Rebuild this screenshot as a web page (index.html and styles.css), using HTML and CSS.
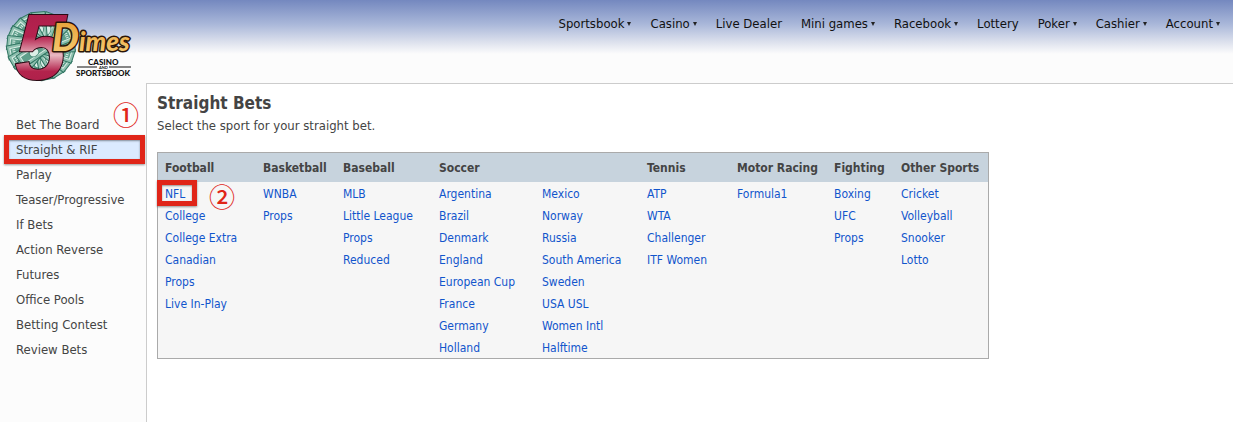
FILE: index.html
```html
<!DOCTYPE html>
<html lang="en">
<head>
  <meta charset="UTF-8" />
  <meta name="viewport" content="width=device-width, initial-scale=1" />
  <title>5Dimes - Straight Bets</title>
  <link rel="stylesheet" href="styles.css">
</head>
<body>
  <header>
    <a class="logo" href="#" aria-label="5Dimes Casino and Sportsbook">
      <svg width="140" height="83" viewBox="0 0 140 83">
        <defs>
          <linearGradient id="five" x1="0" y1="0" x2="0" y2="1">
            <stop offset="0" stop-color="#a81c48" />
            <stop offset="0.4" stop-color="#b5234f" />
            <stop offset="0.58" stop-color="#e9b9c2" />
            <stop offset="0.74" stop-color="#b3234c" />
            <stop offset="1" stop-color="#a81c48" />
          </linearGradient>
          <linearGradient id="gold" x1="0" y1="0" x2="0" y2="1">
            <stop offset="0" stop-color="#e59a2e" />
            <stop offset="1" stop-color="#f7cf78" />
          </linearGradient>
          <g id="bill">
            <rect y="-7" width="34" height="14" fill="#8dbfae" stroke="#2f7562" />
            <rect x="3" y="-4" width="28" height="8" fill="#5f9f8b" stroke="#dcefe7" />
            <ellipse cx="17" rx="5" ry="4" fill="#dcefe7" stroke="#4b8c78" />
            <path d="M26 -2h3M26 0h3M26 2h3" stroke="#dcefe7" />
          </g>
        </defs>
        <use href="#bill" transform="translate(41 46) rotate(100)" />
        <use href="#bill" transform="translate(41 46) rotate(78)" />
        <use href="#bill" transform="translate(41 46) rotate(58)" />
        <use href="#bill" transform="translate(41 46) rotate(38)" />
        <use href="#bill" transform="translate(41 46) rotate(18)" />
        <use href="#bill" transform="translate(41 46) rotate(-2)" />
        <use href="#bill" transform="translate(41 46) rotate(-22)" />
        <use href="#bill" transform="translate(41 46) rotate(-44)" />
        <use href="#bill" transform="translate(41 46) rotate(-70)" />
        <use href="#bill" transform="translate(41 46) rotate(-95)" />
        <use href="#bill" transform="translate(41 46) rotate(-118)" />
        <use href="#bill" transform="translate(41 46) rotate(-138)" />
        <use href="#bill" transform="translate(41 46) rotate(-156)" />
        <use href="#bill" transform="translate(41 46) rotate(-174)" />
        <use href="#bill" transform="translate(41 46) rotate(168)" />
        <use href="#bill" transform="translate(41 46) rotate(150)" />
        <use href="#bill" transform="translate(41 46) rotate(130)" />
        <use href="#bill" transform="translate(20 62) rotate(-34)" />
        <text class="logo-five" x="15" y="79">5</text>
        <text class="logo-dimes" x="52" y="51"><tspan class="logo-d">D</tspan>imes</text>
        <text class="logo-caps" x="88" y="65">CASINO</text>
        <path d="M77 67h20M109 67h22" stroke="#111" />
        <text class="logo-and" x="99" y="69">AND</text>
        <text class="logo-caps" x="76" y="76">SPORTSBOOK</text>
      </svg>
    </a>
    <nav class="topnav">
      <a href="#">Sportsbook<span class="arrow"></span></a>
      <a href="#">Casino<span class="arrow"></span></a>
      <a href="#">Live Dealer</a>
      <a href="#">Mini games<span class="arrow"></span></a>
      <a href="#">Racebook<span class="arrow"></span></a>
      <a href="#">Lottery</a>
      <a href="#">Poker<span class="arrow"></span></a>
      <a href="#">Cashier<span class="arrow"></span></a>
      <a href="#">Account<span class="arrow"></span></a>
    </nav>
  </header>
  <div class="page">
    <nav class="sidebar">
      <a href="#">Bet The Board</a>
      <a href="#" class="active">Straight &amp; RIF<span class="step step-one">①</span></a>
      <a href="#">Parlay</a>
      <a href="#">Teaser/Progressive</a>
      <a href="#">If Bets</a>
      <a href="#">Action Reverse</a>
      <a href="#">Futures</a>
      <a href="#">Office Pools</a>
      <a href="#">Betting Contest</a>
      <a href="#">Review Bets</a>
    </nav>
    <main>
      <h1>Straight Bets</h1>
      <p>Select the sport for your straight bet.</p>
      <table>
        <colgroup>
          <col class="w-football"><col class="w-basketball"><col class="w-baseball">
          <col class="w-soccer"><col class="w-soccer-more"><col class="w-tennis">
          <col class="w-motor"><col class="w-fighting"><col class="w-other">
        </colgroup>
        <thead>
          <tr>
            <th>Football</th>
            <th>Basketball</th>
            <th>Baseball</th>
            <th colspan="2">Soccer</th>
            <th>Tennis</th>
            <th>Motor Racing</th>
            <th>Fighting</th>
            <th>Other Sports</th>
          </tr>
        </thead>
        <tbody>
          <tr>
            <td><a href="#" class="marked">NFL<span class="step step-two">②</span></a></td>
            <td><a href="#">WNBA</a></td>
            <td><a href="#">MLB</a></td>
            <td><a href="#">Argentina</a></td>
            <td><a href="#">Mexico</a></td>
            <td><a href="#">ATP</a></td>
            <td><a href="#">Formula1</a></td>
            <td><a href="#">Boxing</a></td>
            <td><a href="#">Cricket</a></td>
          </tr>
          <tr>
            <td><a href="#">College</a></td>
            <td><a href="#">Props</a></td>
            <td><a href="#">Little League</a></td>
            <td><a href="#">Brazil</a></td>
            <td><a href="#">Norway</a></td>
            <td><a href="#">WTA</a></td>
            <td></td>
            <td><a href="#">UFC</a></td>
            <td><a href="#">Volleyball</a></td>
          </tr>
          <tr>
            <td><a href="#">College Extra</a></td>
            <td></td>
            <td><a href="#">Props</a></td>
            <td><a href="#">Denmark</a></td>
            <td><a href="#">Russia</a></td>
            <td><a href="#">Challenger</a></td>
            <td></td>
            <td><a href="#">Props</a></td>
            <td><a href="#">Snooker</a></td>
          </tr>
          <tr>
            <td><a href="#">Canadian</a></td>
            <td></td>
            <td><a href="#">Reduced</a></td>
            <td><a href="#">England</a></td>
            <td><a href="#">South America</a></td>
            <td><a href="#">ITF Women</a></td>
            <td></td>
            <td></td>
            <td><a href="#">Lotto</a></td>
          </tr>
          <tr>
            <td><a href="#">Props</a></td>
            <td></td>
            <td></td>
            <td><a href="#">European Cup</a></td>
            <td><a href="#">Sweden</a></td>
            <td colspan="4"></td>
          </tr>
          <tr>
            <td><a href="#">Live In-Play</a></td>
            <td></td>
            <td></td>
            <td><a href="#">France</a></td>
            <td><a href="#">USA USL</a></td>
            <td colspan="4"></td>
          </tr>
          <tr>
            <td colspan="3"></td>
            <td><a href="#">Germany</a></td>
            <td><a href="#">Women Intl</a></td>
            <td colspan="4"></td>
          </tr>
          <tr>
            <td colspan="3"></td>
            <td><a href="#">Holland</a></td>
            <td><a href="#">Halftime</a></td>
            <td colspan="4"></td>
          </tr>
        </tbody>
      </table>
    </main>
  </div>
</body>
</html>
```

FILE: styles.css
```css
* {
  box-sizing: border-box;
}
body {
  margin: 0;
  min-height: 100vh;
  display: flex;
  flex-direction: column;
  font-family: Tahoma, "DejaVu Sans Condensed", "DejaVu Sans", sans-serif;
  font-size: 13px;
  color: #444;
  background: #fcfcfc;
}
a {
  color: inherit;
  text-decoration: none;
}
header {
  display: flex;
  justify-content: space-between;
  align-items: flex-start;
  height: 83px;
  background: linear-gradient(#7488bf, #a9b7d9 24px, #dfe3ee 43px, #fcfcfc 54px);
}
.logo svg {
  display: block;
}
.logo-five {
  font: italic bold 92px "Liberation Sans", sans-serif;
  fill: url(#five);
  stroke: #2a0a14;
  stroke-width: 2px;
  paint-order: stroke;
}
.logo-dimes {
  font: italic 900 26px Lato, sans-serif;
  fill: url(#gold);
  stroke: #2a1608;
  stroke-width: 3px;
  stroke-linejoin: round;
  paint-order: stroke;
}
.logo-d {
  font-size: 38px;
}
.logo-caps {
  font: 900 8px Lato, sans-serif;
  fill: #111;
}
.logo-and {
  font: bold 4px Lato, sans-serif;
  fill: #111;
}
.topnav {
  display: flex;
  gap: 19px;
  padding: 15px 13px 0 0;
  line-height: 18px;
  color: #111;
}
.topnav a {
  display: flex;
  align-items: center;
  gap: 3px;
}
.arrow {
  border: 2px solid transparent;
  border-top: 4px solid #222;
  border-bottom: 0;
}
.page {
  flex: 1;
  display: flex;
}
.sidebar {
  flex: 0 0 146px;
  padding-top: 29px;
}
.sidebar a {
  display: block;
  padding-left: 16px;
  line-height: 25px;
}
.sidebar .active {
  position: relative;
  background: linear-gradient(#dbeaff, #dbeaff) 8px 0 / 132px 100% no-repeat;
}
main {
  flex: 1;
  padding: 9px 10px;
  border-top: 1px solid #ccc;
  border-left: 1px solid #ccc;
  background: #fff;
}
h1 {
  margin: 0;
  font-size: 17px;
  line-height: 20px;
}
p {
  margin: 4px 0 17px;
  line-height: 18px;
}
table {
  width: 832px;
  table-layout: fixed;
  border: 1px solid #aaa;
  border-spacing: 0;
  background: #f6f6f6;
  font-size: 12px;
}
th {
  height: 29px;
  padding: 0 0 0 7px;
  background: #c7d3dd;
  text-align: left;
  white-space: nowrap;
}
td {
  height: 22px;
  padding: 2px 0 0 7px;
  line-height: 20px;
  color: #15c;
  white-space: nowrap;
}
.w-football { width: 98px; }
.w-basketball { width: 80px; }
.w-baseball { width: 96px; }
.w-soccer { width: 103px; }
.w-soccer-more { width: 105px; }
.w-tennis { width: 90px; }
.w-motor { width: 97px; }
.w-fighting { width: 67px; }
.marked {
  position: relative;
}

/* red frames and step numbers drawn over the page */
.active::after,
.marked::after {
  content: "";
  position: absolute;
  border: 5px solid #e02518;
  box-shadow: 0 1px 2px rgba(0,0,0,0.4), inset 0 1px 2px rgba(0,0,0,0.4);
}
.active::after {
  inset: -2px 1px -2px 4px;
}
.marked::after {
  inset: -7px -12px -5px -8px;
}
.step {
  position: absolute;
  font: 500 26px/26px "Noto Sans CJK JP", sans-serif;
  color: #e02518;
}
.step-one {
  right: 7px;
  top: -36px;
}
.step-two {
  left: 44px;
  top: -4px;
}
```
